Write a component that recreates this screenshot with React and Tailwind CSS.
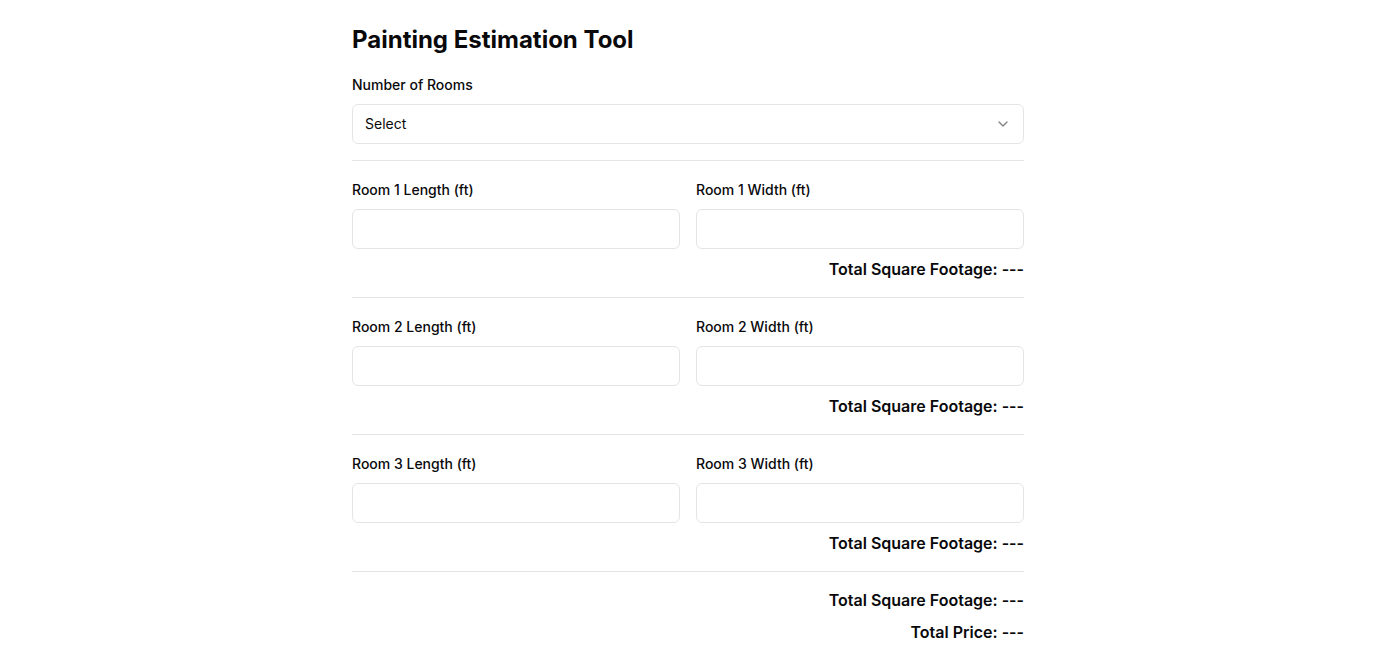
import { ChevronDown } from 'lucide-react';

const rooms = [1, 2, 3];

function Field({ label }) {
  return (
    <div className="flex flex-col">
      <label className="text-sm font-medium leading-5 mb-[9px] text-[#09090b]">{label}</label>
      <input
        type="text"
        className="h-10 w-full rounded-md border border-[#e4e4e7] bg-white px-3 text-sm outline-none"
      />
    </div>
  );
}

export default function App() {
  return (
    <div
      className="min-h-screen bg-white text-[#09090b]"
      style={{ fontFamily: 'Inter, "Liberation Sans", sans-serif' }}
    >
      <div className="mx-auto max-w-2xl pt-6 pb-6">
        <h1 className="text-2xl font-bold leading-8">Painting Estimation Tool</h1>

        {/* Number of rooms */}
        <div className="mt-[19px]">
          <label className="block text-sm font-medium leading-5 mb-[9px]">Number of Rooms</label>
          <button className="flex h-10 w-full items-center justify-between rounded-md border border-[#e4e4e7] bg-white px-3 text-sm">
            <span>Select</span>
            <ChevronDown className="h-4 w-4 opacity-50" />
          </button>
        </div>

        <div className="mt-4 h-px bg-[#e4e4e7]" />

        {rooms.map((n) => (
          <div key={n}>
            <div className="pt-[19px] pb-4">
              <div className="grid grid-cols-2 gap-4">
                <Field label={`Room ${n} Length (ft)`} />
                <Field label={`Room ${n} Width (ft)`} />
              </div>
              <p className="mt-2 text-right text-base font-semibold leading-6">Total Square Footage: ---</p>
            </div>
            <div className="h-px bg-[#e4e4e7]" />
          </div>
        ))}

        <div className="mt-4 flex flex-col gap-2 text-right">
          <p className="text-base font-semibold leading-6">Total Square Footage: ---</p>
          <p className="text-base font-semibold leading-6">Total Price: ---</p>
        </div>
      </div>
    </div>
  );
}
